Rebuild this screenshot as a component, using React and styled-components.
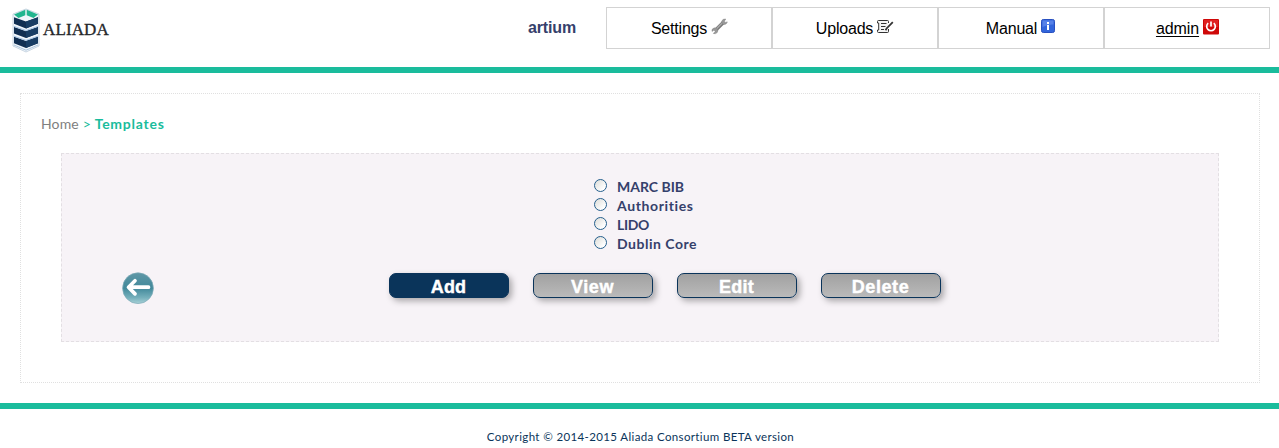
import React, { useState } from "react";
import styled, { createGlobalStyle } from "styled-components";

const Global = createGlobalStyle`
  * { box-sizing: border-box; }
  body { margin: 0; background: #fff; overflow: hidden; font-family: Lato, "Liberation Sans", sans-serif; color: #35406b; }
`;
const Header = styled.header`
  display: flex;
  height: 73px;
  padding: 7px 9px 0 12px;
  border-bottom: 6px solid #1abc9c;
`;
const Brand = styled.div`
  display: flex;
  align-items: flex-start;
  flex: 1;
`;
const BrandName = styled.span`
  margin: 13px 0 0 3px;
  font: 17px/20px "Liberation Serif", serif;
  letter-spacing: 0.12px;
  color: #26282b;
  -webkit-text-stroke: 0.35px #26282b;
`;
const Institution = styled.div`
  width: 78px;
  padding-top: 11px;
  font: bold 16px/20px "Liberation Sans", sans-serif;
  letter-spacing: -0.15px;
`;
const Nav = styled.nav`
  display: flex;
`;
const NavItem = styled.a`
  display: flex;
  justify-content: center;
  width: 166px;
  height: 42px;
  padding: 10px 0 0 ${(p) => (p.$tight ? 0 : 1)}px;
  border: 1px solid #d3d3d3;
  color: #000;
  font: 16px/20px "Liberation Sans", sans-serif;
  svg { margin: 0 0 0 4px; flex: none; }
`;
const NavLabel = styled.span`
  letter-spacing: ${(p) => p.$spacing || 0}px;
  height: 20px;
  margin-top: 1px;
  text-decoration: ${(p) => (p.$underline ? "underline" : "none")};
  text-underline-offset: 2px;
  text-decoration-thickness: 1px;
`;
const Main = styled.main`
  height: 290px;
  margin: 20px 19px 20px 20px;
  padding: 20px 40px 0;
  border: 1px dotted #e0e0e0;
`;
const Breadcrumb = styled.div`
  height: 39px;
  margin-left: -20px;
  font-size: 14px;
  line-height: 20px;
  letter-spacing: 0.15px;
  color: #808080;
  white-space: pre;
`;
const Separator = styled.span`
  color: #1abc9c;
`;
const Current = styled.b`
  color: #1abc9c;
  letter-spacing: 0.75px;
`;
const Panel = styled.section`
  height: 189px;
  padding-top: 23px;
  border: 1px dashed #e3dfe3;
  background: #f7f3f7;
`;
const Options = styled.div`
  width: 110px;
  margin-left: 532px;
`;
const Option = styled.label`
  display: flex;
  height: 19px;
  font-weight: bold;
  font-size: 14px;
  line-height: 20px;
  letter-spacing: ${(p) => p.$spacing}px;
  white-space: nowrap;
`;
const Radio = styled.input`
  appearance: none;
  width: 13px;
  height: 13px;
  margin: 2px 10px 0 0;
  border: 1px solid #255f8d;
  border-radius: 50%;
  background: linear-gradient(135deg, #dcdcd8, #fff 80%);
  &:checked { box-shadow: inset 0 0 0 3px #fff; background: #255f8d; }
`;
const Actions = styled.div`
  display: flex;
  align-items: flex-start;
  margin-top: 18px;
  padding-left: 59px;
`;
const BackLink = styled.a`
  width: 34px;
  height: 34px;
  margin-right: 234px;
`;
const Button = styled.button`
  width: 120px;
  height: 25px;
  margin: 2px 24px 0 0;
  padding: 2px 1px 0 0;
  border: 1px solid #0a345a;
  border-radius: 7px;
  background: ${(p) => (p.$primary ? "#0a345a" : "linear-gradient(#a1a1a1, #bababa)")};
  box-shadow: 3px 3px 6px #a9a6a9;
  color: #fff;
  font: bold 18px/22px "Liberation Sans", sans-serif;
  letter-spacing: ${(p) => p.$spacing}px;
  -webkit-text-stroke: 0.4px #fff;
`;
const Footer = styled.footer`
  height: 45px;
  border-top: 6px solid #1abc9c;
  padding: 18px 0 0 2px;
  text-align: center;
  font-size: 11.5px;
  line-height: 20px;
  letter-spacing: 0.37px;
  color: #0a345a;
`;

const Logo = () => (
  <svg width="28" height="46" viewBox="12 7 28 46">
    <path d="M13 14 26 9l13 5v32l-13 6-13-6z" fill="#f1f6fb" stroke="#b5c6d6" strokeWidth=".7" />
    <path d="M14 14.5 25.3 9.7v5.6L18.5 18zm24 0L26.7 9.7v5.6l6.8 2.7z" fill="#22b58f" />
    {[19.5, 9.7, 0].map((y) => (
      <g key={y} transform={`translate(0 ${y})`}>
        <path d="m14 17.3 12 4.2 12-4.2v6.4L26 28.4l-12-4.7z" fill="#112f52" />
        <path d="M26 21.5v6.9l12-4.7v-6.4z" fill="#183d64" />
        {y > 0 && <path d="m14 16.6 12 4.2 12-4.2" fill="none" stroke="#a6c6e6" strokeWidth="1" />}
      </g>
    ))}
    <path d="m14 45 12 5.2 12-5.2" fill="none" stroke="#9cb9d6" strokeWidth=".8" />
  </svg>
);
const Wrench = () => (
  <svg width="17" height="17" viewBox="0 0 17 17">
    <path d="m4.3 12.4 8-8" stroke="#777" strokeWidth="3.6" />
    <path d="M4.8 11.4 12 4.2" stroke="#aaa" strokeWidth="1.4" />
    <path d="M1 11.5Q2.8 9 5.6 10.2 7.6 12 6.4 14.3 4.7 16.4 2.4 15.5L4.2 13.4 3 12 1 13.4zM14.7 1Q11.6.6 10.7 3.3q-.3 2.5 1.7 3.2 3 .4 4-2.6l-2.2.5-.8-1.2z" fill="#999" stroke="#808080" strokeWidth=".5" />
  </svg>
);
const Notes = () => (
  <svg width="17" height="17" viewBox="0 0 17 17" fill="none" stroke="#333">
    <path d="M11.5 5V3.5q0-1-1-1H1.5q-1 0-1 1V5h1.2v7H.5v1.5q0 1 1 1H10.5q1 0 1-1V11" fill="#f5f5f5" />
    <path d="M4 5.5h5.5M4 8.5h4.5M4 11.5h3" />
    <path d="m15.8 4.2-6 6-1.3 2" strokeWidth="1.8" />
  </svg>
);
const Info = () => (
  <svg width="15" height="16" viewBox="0 0 15 16">
    <rect x=".5" y="1.5" width="13" height="13" rx="1.8" fill="#3265db" stroke="#2850c0" />
    <path d="M1.5 2.5h11v4Q7 6 1.5 9z" fill="#5681e8" />
    <path d="M6 4h2v2H6zm0 3h2v5H6z" fill="#fff" />
  </svg>
);
const Power = () => (
  <svg width="16" height="17" viewBox="0 0 16 17">
    <rect y="1" width="16" height="15.5" rx="1" fill="#cf0808" />
    <path d="M1 2h14v7H1z" fill="#df2222" />
    <path d="M5.2 5.2a4.3 4.3 0 1 0 5.6 0M8 3.4v5.2" fill="none" stroke="#fff" strokeWidth="1.7" />
  </svg>
);
const Back = () => (
  <svg width="34" height="34" viewBox="0 0 34 34">
    <defs>
      <linearGradient id="disc" x2="0" y2="1">
        <stop stopColor="#5f97a6" /><stop offset=".5" stopColor="#42899b" /><stop offset=".8" stopColor="#74afbb" /><stop offset="1" stopColor="#a7d0d6" />
      </linearGradient>
    </defs>
    <circle cx="17" cy="17.2" r="15.4" fill="url(#disc)" stroke="#7eabb8" strokeWidth=".7" />
    <path d="M27.5 16.2H8M14 9.7 7.5 16.2l6.5 6.7" fill="none" stroke="#fff" strokeWidth="3.7" strokeLinecap="round" strokeLinejoin="round" />
  </svg>
);

const templates = [["MARC BIB", 0], ["Authorities", 0.62], ["LIDO", -0.35], ["Dublin Core", 0.52]];
const buttons = [["Add", 0.1], ["View", 0.6], ["Edit", 0.3], ["Delete", 0.6]];

export default function App() {
  const [selected, setSelected] = useState(null);
  return (
    <>
      <Global />
      <Header>
        <Brand><Logo /><BrandName>ALIADA</BrandName></Brand>
        <Institution>artium</Institution>
        <Nav>
          <NavItem><NavLabel $spacing={-0.2}>Settings</NavLabel><Wrench /></NavItem>
          <NavItem $tight><NavLabel $spacing={-0.2}>Uploads</NavLabel><Notes /></NavItem>
          <NavItem $tight><NavLabel $spacing={-0.2}>Manual</NavLabel><Info /></NavItem>
          <NavItem><NavLabel $underline $spacing={-0.1}>admin</NavLabel><Power /></NavItem>
        </Nav>
      </Header>
      <Main>
        <Breadcrumb>Home <Separator>&gt; </Separator><Current>Templates</Current></Breadcrumb>
        <Panel>
          <Options>
            {templates.map(([name, spacing]) => (
              <Option key={name} $spacing={spacing}>
                <Radio type="radio" name="template" checked={selected === name} onChange={() => setSelected(name)} />
                {name}
              </Option>
            ))}
          </Options>
          <Actions>
            <BackLink aria-label="Back"><Back /></BackLink>
            {buttons.map(([name, spacing], i) => (
              <Button key={name} type="button" $primary={i === 0} $spacing={spacing}>{name}</Button>
            ))}
          </Actions>
        </Panel>
      </Main>
      <Footer>Copyright © 2014-2015 Aliada Consortium BETA version</Footer>
    </>
  );
}
